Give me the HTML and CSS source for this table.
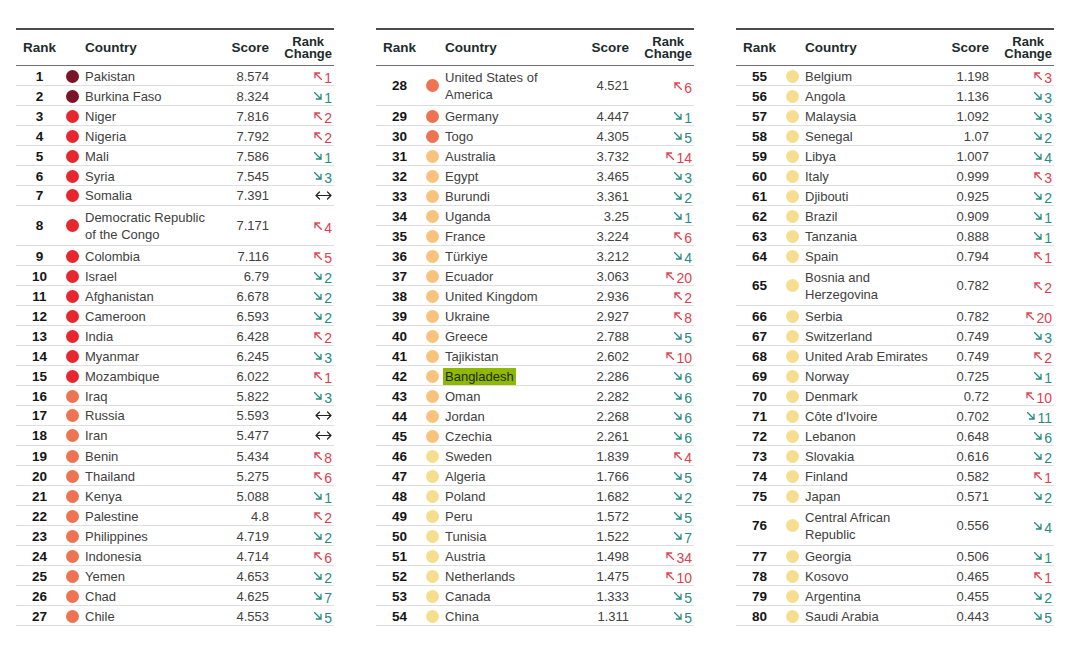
FILE: index.html
```html
<!DOCTYPE html>
<html lang="en">
<head>
<meta charset="utf-8">
<title>Rankings</title>
<link rel="stylesheet" href="styles.css">
</head>
<body>
<div class="page" id="page"></div>
<svg width="0" height="0" class="defs" aria-hidden="true">
  <symbol id="up" viewBox="0 0 8 8"><path d="M7.5 7.5 L1 1 M1 1 L1 5.5 M1 1 L5.5 1" fill="none" stroke="currentColor" stroke-width="1.3" stroke-linecap="square"/></symbol>
  <symbol id="down" viewBox="0 0 8 8"><path d="M0.5 0.5 L7 7 M7 7 L7 2.5 M7 7 L2.5 7" fill="none" stroke="currentColor" stroke-width="1.3" stroke-linecap="square"/></symbol>
  <symbol id="same" viewBox="0 0 17 9"><path d="M1 4.5 L16 4.5 M1 4.5 L4.5 1 M1 4.5 L4.5 8 M16 4.5 L12.5 1 M16 4.5 L12.5 8" fill="none" stroke="currentColor" stroke-width="1.2" stroke-linecap="round" stroke-linejoin="round"/></symbol>
</svg>
<script src="app.js"></script>
</body>
</html>
```
FILE: app.js
```js
var data = [
[
[1,"Pakistan","8.574","u",1,"c1"],
[2,"Burkina Faso","8.324","d",1,"c1"],
[3,"Niger","7.816","u",2,"c2"],
[4,"Nigeria","7.792","u",2,"c2"],
[5,"Mali","7.586","d",1,"c2"],
[6,"Syria","7.545","d",3,"c2"],
[7,"Somalia","7.391","s",0,"c2"],
[8,"Democratic Republic of the Congo","7.171","u",4,"c2",1],
[9,"Colombia","7.116","u",5,"c2"],
[10,"Israel","6.79","d",2,"c2"],
[11,"Afghanistan","6.678","d",2,"c2"],
[12,"Cameroon","6.593","d",2,"c2"],
[13,"India","6.428","u",2,"c2"],
[14,"Myanmar","6.245","d",3,"c2"],
[15,"Mozambique","6.022","u",1,"c2"],
[16,"Iraq","5.822","d",3,"c3"],
[17,"Russia","5.593","s",0,"c3"],
[18,"Iran","5.477","s",0,"c3"],
[19,"Benin","5.434","u",8,"c3"],
[20,"Thailand","5.275","u",6,"c3"],
[21,"Kenya","5.088","d",1,"c3"],
[22,"Palestine","4.8","u",2,"c3"],
[23,"Philippines","4.719","d",2,"c3"],
[24,"Indonesia","4.714","u",6,"c3"],
[25,"Yemen","4.653","d",2,"c3"],
[26,"Chad","4.625","d",7,"c3"],
[27,"Chile","4.553","d",5,"c3"]
],
[
[28,"United States of America","4.521","u",6,"c3",1],
[29,"Germany","4.447","d",1,"c3"],
[30,"Togo","4.305","d",5,"c3"],
[31,"Australia","3.732","u",14,"c4"],
[32,"Egypt","3.465","d",3,"c4"],
[33,"Burundi","3.361","d",2,"c4"],
[34,"Uganda","3.25","d",1,"c4"],
[35,"France","3.224","u",6,"c4"],
[36,"Türkiye","3.212","d",4,"c4"],
[37,"Ecuador","3.063","u",20,"c4"],
[38,"United Kingdom","2.936","u",2,"c4"],
[39,"Ukraine","2.927","u",8,"c4"],
[40,"Greece","2.788","d",5,"c4"],
[41,"Tajikistan","2.602","u",10,"c4"],
[42,"Bangladesh","2.286","d",6,"c4",0,1],
[43,"Oman","2.282","d",6,"c4"],
[44,"Jordan","2.268","d",6,"c4"],
[45,"Czechia","2.261","d",6,"c4"],
[46,"Sweden","1.839","u",4,"c5"],
[47,"Algeria","1.766","d",5,"c5"],
[48,"Poland","1.682","d",2,"c5"],
[49,"Peru","1.572","d",5,"c5"],
[50,"Tunisia","1.522","d",7,"c5"],
[51,"Austria","1.498","u",34,"c5"],
[52,"Netherlands","1.475","u",10,"c5"],
[53,"Canada","1.333","d",5,"c5"],
[54,"China","1.311","d",5,"c5"]
],
[
[55,"Belgium","1.198","u",3,"c5"],
[56,"Angola","1.136","d",3,"c5"],
[57,"Malaysia","1.092","d",3,"c5"],
[58,"Senegal","1.07","d",2,"c5"],
[59,"Libya","1.007","d",4,"c5"],
[60,"Italy","0.999","u",3,"c5"],
[61,"Djibouti","0.925","d",2,"c5"],
[62,"Brazil","0.909","d",1,"c5"],
[63,"Tanzania","0.888","d",1,"c5"],
[64,"Spain","0.794","u",1,"c5"],
[65,"Bosnia and Herzegovina","0.782","u",2,"c5",1],
[66,"Serbia","0.782","u",20,"c5"],
[67,"Switzerland","0.749","d",3,"c5"],
[68,"United Arab Emirates","0.749","u",2,"c5"],
[69,"Norway","0.725","d",1,"c5"],
[70,"Denmark","0.72","u",10,"c5"],
[71,"Côte d'Ivoire","0.702","d",11,"c5"],
[72,"Lebanon","0.648","d",6,"c5"],
[73,"Slovakia","0.616","d",2,"c5"],
[74,"Finland","0.582","u",1,"c5"],
[75,"Japan","0.571","d",2,"c5"],
[76,"Central African Republic","0.556","d",4,"c5",1],
[77,"Georgia","0.506","d",1,"c5"],
[78,"Kosovo","0.465","u",1,"c5"],
[79,"Argentina","0.455","d",2,"c5"],
[80,"Saudi Arabia","0.443","d",5,"c5"]
]
];

var page = document.getElementById("page");
data.forEach(function (rows) {
  var t = document.createElement("div");
  t.className = "tbl";
  var h = '<div class="row head"><div class="rank">Rank</div><div></div><div class="country">Country</div><div class="score">Score</div><div class="change"><span class="two"><span class="ln">Rank</span><span class="ln">Change</span></span></div></div>';
  rows.forEach(function (r) {
    var ch;
    if (r[3] === "s") {
      ch = '<svg class="same"><use href="#same"/></svg>';
    } else {
      var cls = r[3] === "u" ? "up" : "down";
      ch = '<span class="' + cls + '"><svg class="arr"><use href="#' + (r[3] === "u" ? "up" : "down") + '"/></svg><span class="num">' + r[4] + '</span></span>';
    }
    var name = r[7] ? '<span class="hl">' + r[1] + '</span>' : r[1];
    h += '<div class="row' + (r[6] ? ' tall' : '') + '"><div class="rank">' + r[0] + '</div><div class="dotc"><span class="dot ' + r[5] + '"></span></div><div class="country">' + name + '</div><div class="score">' + r[2] + '</div><div class="change">' + ch + '</div></div>';
  });
  t.innerHTML = h;
  page.appendChild(t);
});
```
FILE: styles.css
```css
html, body {
  margin: 0;
  padding: 0;
  background: #ffffff;
}
body {
  font-family: "Liberation Sans", Arial, sans-serif;
  color: #414141;
  font-size: 13px;
}
.defs {
  position: absolute;
  width: 0;
  height: 0;
}
.page {
  display: flex;
  gap: 42px;
  padding: 28px 0 0 16px;
}
.tbl {
  width: 318px;
  border-top: 2px solid #4a4a4a;
}
.row {
  display: grid;
  grid-template-columns: 47px 22px 130px 54px 63px 2px;
  align-items: center;
  height: 20px;
  box-sizing: border-box;
  border-bottom: 1px solid #dedede;
}
.row.tall {
  height: 40px;
}
.row.head {
  height: 36px;
  border-bottom: 1px solid #6e6e6e;
  font-weight: bold;
  color: #1c2b2d;
  font-size: 13.5px;
}
.head .rank {
  color: #1c2b2d;
  font-size: 13.5px;
}
.rank {
  text-align: center;
  font-weight: bold;
  color: #151515;
  font-size: 13.5px;
}
.dotc {
  display: flex;
  align-items: center;
}
.dot {
  display: block;
  width: 13px;
  height: 13px;
  border-radius: 50%;
  margin-left: 3px;
}
.c1 { background: #7a1426; }
.c2 { background: #e8262d; }
.c3 { background: #ee7352; }
.c4 { background: #f8c47d; }
.c5 { background: #f7de8e; }
.country {
  line-height: 17px;
  padding-right: 4px;
}
.hl {
  background: #8fb800;
  color: #1f2a10;
  margin-left: -2px;
  padding: 1px 2px;
}
.score {
  text-align: right;
}
.change {
  display: flex;
  justify-content: flex-end;
  align-items: center;
}
.two {
  display: flex;
  flex-direction: column;
  align-items: center;
  font-size: 13px;
  margin-top: 1px;
}
.ln {
  display: block;
  line-height: 11.6px;
  height: 11.6px;
}
.up, .down {
  display: flex;
  align-items: center;
  gap: 2px;
}
.up { color: #e0414f; }
.down { color: #2a8a83; }
.arr {
  width: 8px;
  height: 8px;
}
.num {
  font-size: 14px;
  margin-top: 4px;
  line-height: 16px;
}
.same {
  width: 17px;
  height: 9px;
  color: #222222;
}
```
